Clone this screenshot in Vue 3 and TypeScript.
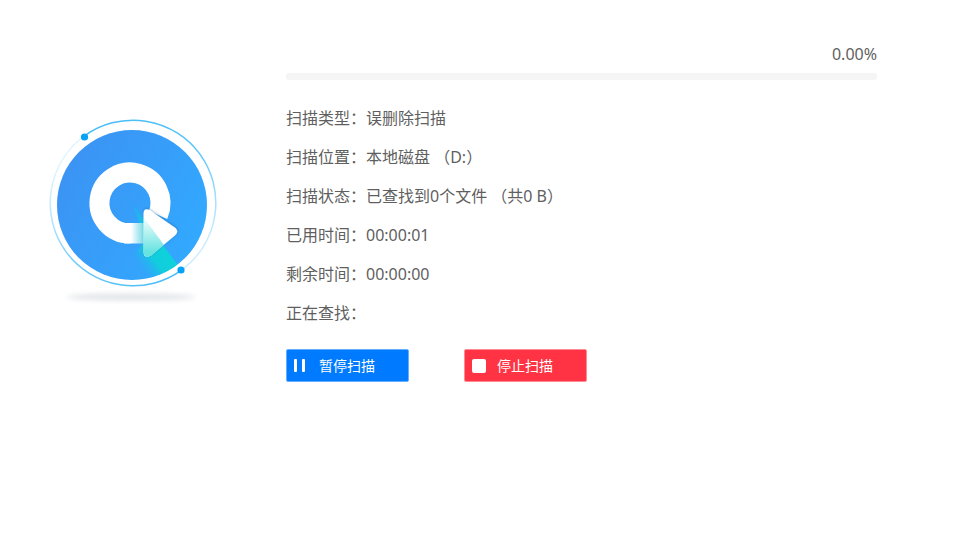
<script setup lang="ts">
const colon = '\uFF1A'
const open = '\uFF08'
const close = '\uFF09'
const rows: { label: string; value: string }[] = [
  { label: `扫描类型${colon}`, value: '误删除扫描' },
  { label: `扫描位置${colon}`, value: `本地磁盘 ${open}D:${close}` },
  { label: `扫描状态${colon}`, value: `已查找到0个文件 ${open}共0 B${close}` },
  { label: `已用时间${colon}`, value: '00:00:01' },
  { label: `剩余时间${colon}`, value: '00:00:00' },
  { label: `正在查找${colon}`, value: '' },
]
</script>

<template>
  <div class="page">
    <div class="logo-col">
      <svg class="logo" width="176" height="192" viewBox="48 115 176 192" aria-hidden="true">
        <defs>
          <linearGradient id="disc" x1="0" y1="0.2" x2="1" y2="0.8">
            <stop offset="0" stop-color="#3c92f3" />
            <stop offset="1" stop-color="#31aaff" />
          </linearGradient>
          <linearGradient id="tail" gradientUnits="userSpaceOnUse" x1="124" y1="233" x2="148" y2="233">
            <stop offset="0" stop-color="#fff" />
            <stop offset="0.3" stop-color="#fff" />
            <stop offset="1" stop-color="#6fe3de" stop-opacity="0.7" />
          </linearGradient>
          <linearGradient id="beam" gradientUnits="userSpaceOnUse" x1="160" y1="241" x2="134.400" y2="260.200">
            <stop offset="0" stop-color="#0ed2da" />
            <stop offset="0.5" stop-color="#10cfdc" stop-opacity="0.95" />
            <stop offset="1" stop-color="#22b4ee" stop-opacity="0" />
          </linearGradient>
          <linearGradient id="apex" gradientUnits="userSpaceOnUse" x1="134" y1="206" x2="150" y2="228">
            <stop offset="0" stop-color="#1fb2ee" stop-opacity="0.7" />
            <stop offset="1" stop-color="#10cfdc" stop-opacity="0.9" />
          </linearGradient>
          <linearGradient id="overlay" gradientUnits="userSpaceOnUse" x1="148" y1="220" x2="148" y2="252">
            <stop offset="0" stop-color="#3fdcd8" stop-opacity="0.1" />
            <stop offset="1" stop-color="#3fdcd8" stop-opacity="0.8" />
          </linearGradient>
          <linearGradient id="arcA" gradientUnits="userSpaceOnUse" x1="84" y1="137" x2="210" y2="250">
            <stop offset="0" stop-color="#45bcf8" />
            <stop offset="0.6" stop-color="#5cc6fa" />
            <stop offset="1" stop-color="#d8f2ff" />
          </linearGradient>
          <linearGradient id="arcB" gradientUnits="userSpaceOnUse" x1="181" y1="270" x2="55" y2="165">
            <stop offset="0" stop-color="#45bcf8" />
            <stop offset="0.55" stop-color="#72cdfa" />
            <stop offset="1" stop-color="#e4f6ff" />
          </linearGradient>
          <filter id="soft" x="-20%" y="-150%" width="140%" height="400%">
            <feGaussianBlur stdDeviation="2.500" />
          </filter>
          <filter id="arrowShadow" x="-20%" y="-20%" width="140%" height="140%">
            <feDropShadow dx="0.5" dy="-0.7" stdDeviation="0.9" flood-color="#16508c" flood-opacity="0.4" />
          </filter>
          <clipPath id="discClip"><circle cx="132" cy="205" r="75" /></clipPath>
          <clipPath id="arrowClip">
            <path d="M143.500 214 Q143.500 207.500 149.500 210 L175.500 228 Q179 231.500 175.500 235 L151 255.500 Q144 259.500 143.500 252 Z" />
          </clipPath>
        </defs>
        <ellipse cx="131" cy="297" rx="65" ry="3.500" fill="#e2e5e9" filter="url(#soft)" />
        <path d="M84.100 136.100 A83 83 0 0 1 199.900 154.100 A83 83 0 0 1 181.900 269.900" fill="none" stroke="url(#arcA)" stroke-width="1.500" />
        <path d="M181.900 269.900 A83 83 0 0 1 66.100 251.900 A83 83 0 0 1 84.100 136.100" fill="none" stroke="url(#arcB)" stroke-width="1.500" />
        <circle cx="84.500" cy="137" r="3.600" fill="#06a2f5" />
        <circle cx="181" cy="270" r="3.600" fill="#06a2f5" />
        <circle cx="132" cy="205" r="75" fill="url(#disc)" />
        <g clip-path="url(#discClip)">
          <path d="M150 227.400 L180 268 L150 285 L125 265 L143 243.500 L143 228 Z" fill="url(#beam)" />
        </g>
        <path d="M132 203 L150 227.400 L143 240 L140 225 Z" fill="url(#apex)" />
        <path d="M130 233.500 A30.500 30.500 0 1 1 158 215" fill="none" stroke="#fff" stroke-width="20" />
        <rect x="124" y="223" width="24" height="20.500" fill="url(#tail)" />
        <path d="M143.500 214 Q143.500 207.500 149.500 210 L175.500 228 Q179 231.500 175.500 235 L151 255.500 Q144 259.500 143.500 252 Z" fill="#fff" filter="url(#arrowShadow)" />
        <path d="M136 207 L167 249 L145 270 L130 230 Z" fill="url(#overlay)" clip-path="url(#arrowClip)" />
      </svg>
    </div>
    <div class="main">
      <div class="percent">0.00%</div>
      <div class="track"></div>
      <ul class="rows">
        <li v-for="r in rows" :key="r.label" class="row">
          <span class="label">{{ r.label }}</span>
          <span class="value">{{ r.value }}</span>
        </li>
      </ul>
      <div class="actions">
        <button class="btn pause" type="button">
          <span class="bars"><i></i><i></i></span>
          <span>暂停扫描</span>
        </button>
        <button class="btn stop" type="button">
          <span class="square"></span>
          <span>停止扫描</span>
        </button>
      </div>
    </div>
  </div>
</template>

<style>
html, body { margin: 0; background: #fff; }
</style>

<style scoped>
.page {
  width: 966px;
  height: 545px;
  display: flex;
  font-family: "Noto Sans", "Noto Sans CJK SC", sans-serif;
  color: #5f5f5f;
  font-size: 16px;
  overflow: hidden;
}
.logo-col {
  width: 286px;
  flex: none;
  padding: 115px 0 0 48px;
  box-sizing: border-box;
}
.logo { display: block; }
.main {
  width: 591px;
  flex: none;
  padding-top: 43px;
  box-sizing: border-box;
}
.percent {
  text-align: right;
  line-height: 22px;
}
.track {
  height: 7px;
  margin-top: 8px;
  border-radius: 3px;
  background: #f5f5f5;
}
.rows {
  list-style: none;
  margin: 19px 0 0;
  padding: 0;
}
.row {
  display: flex;
  height: 39px;
  line-height: 39px;
}
.label { width: 80px; flex: none; }
.value { white-space: pre; }
.actions {
  display: flex;
  gap: 55px;
  margin-top: 16px;
}
.btn {
  width: 123px;
  height: 33px;
  box-sizing: border-box;
  padding: 0 0 2px 7px;
  display: flex;
  align-items: center;
  font: inherit;
  font-size: 14px;
  color: #fff;
  border-radius: 2px;
  cursor: pointer;
}
.pause { background: #007bff; border: 1px solid #66adff; }
.stop { background: #ff3344; border: 1px solid #ff8a94; }
.bars {
  display: flex;
  gap: 5px;
  width: 25px;
  margin-top: 2px;
}
.bars i {
  display: block;
  width: 3px;
  height: 13px;
  border-radius: 1px;
  background: #fff;
}
.square {
  width: 14px;
  height: 14px;
  margin: 2px 11px 0 0;
  border-radius: 2px;
  background: #fff;
}
</style>
